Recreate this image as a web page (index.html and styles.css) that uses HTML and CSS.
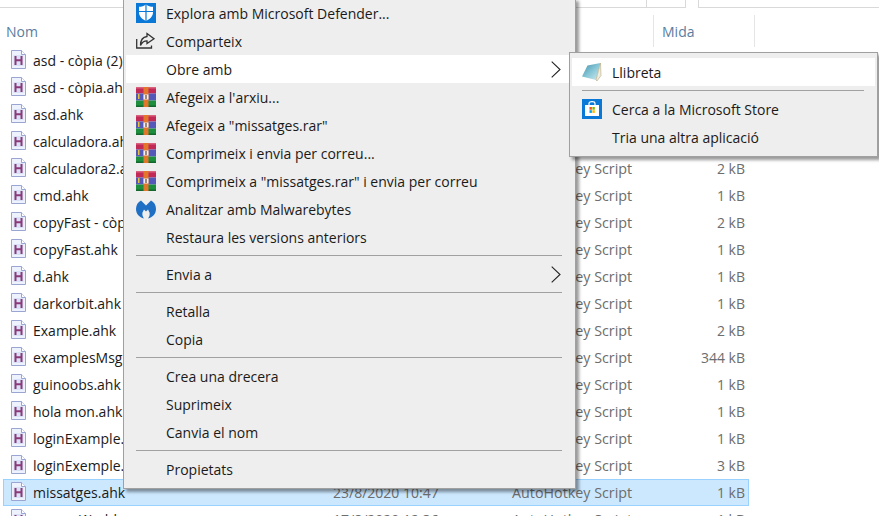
FILE: index.html
```html
<!DOCTYPE html>
<html lang="ca">
<head>
    <meta charset="UTF-8">
    <title>Obre amb</title>
    <link rel="stylesheet" href="styles.css">
</head>
<body>

    <svg class="defs" width="0" height="0">
        <defs>
            <linearGradient id="pad" x1="0" y1="0" x2="1" y2="1">
                <stop offset="0" stop-color="#3f8ea8"/>
                <stop offset="0.5" stop-color="#86c6d6"/>
                <stop offset="1" stop-color="#d4ecf0"/>
            </linearGradient>
        </defs>
        <symbol id="ahk" viewBox="0 0 15 19">
            <path d="M.5 .5H10.500L14.500 4.500V18.500H.5Z" fill="#eef2fc" stroke="#9aa5d2"/>
            <path d="M10.500 .5V4.500H14.500" fill="#fff" stroke="#9aa5d2"/>
            <rect x="2.500" y="5" width="10" height="11" fill="#d9e1f6"/>
            <path d="M4.500 6V15M10.500 6V15M4.500 10.300H10.500" fill="none" stroke="#8a3a78" stroke-width="2"/>
        </symbol>
        <symbol id="rar" viewBox="0 0 20 20">
            <rect y="0" width="20" height="6.500" fill="#c22a55"/>
            <rect y="0" width="20" height="1.500" fill="#d9627f"/>
            <rect y="6.500" width="20" height="7" fill="#5458b8"/>
            <rect y="13.500" width="20" height="6.500" fill="#1d8d3e"/>
            <rect y="18.500" width="20" height="1.500" fill="#14682d"/>
            <rect x="7.500" width="5" height="20" fill="#e2762a"/>
            <rect x="2" y="7" width="1.500" height="5" fill="#e8c23c"/>
            <rect x="7.500" y="7.500" width="5" height="5" fill="#f4f0ee"/>
            <rect x="9.300" y="8" width="1.400" height="4" fill="#7a5a50"/>
        </symbol>
    </svg>

    <div class="explorer">
        <div class="tabs">
            <span class="tab-line tab-a"></span>
            <span class="tab-line tab-b"></span>
            <span class="tab-line tab-c"></span>
            <span class="tab-gap"></span>
        </div>
        <div class="head">
            <span class="col-name">Nom</span>
            <span class="col-size">Mida</span>
        </div>
        <div class="files">
            <div class="file"><svg class="ficon"><use href="#ahk"/></svg><span class="fname">asd - còpia (2).ahk</span><span class="ftype">AutoHotkey Script</span><span class="fsize">1 kB</span></div>
            <div class="file"><svg class="ficon"><use href="#ahk"/></svg><span class="fname">asd - còpia.ahk</span><span class="ftype">AutoHotkey Script</span><span class="fsize">1 kB</span></div>
            <div class="file"><svg class="ficon"><use href="#ahk"/></svg><span class="fname">asd.ahk</span><span class="ftype">AutoHotkey Script</span><span class="fsize">1 kB</span></div>
            <div class="file"><svg class="ficon"><use href="#ahk"/></svg><span class="fname">calculadora.ahk</span><span class="ftype">AutoHotkey Script</span><span class="fsize">1 kB</span></div>
            <div class="file"><svg class="ficon"><use href="#ahk"/></svg><span class="fname">calculadora2.ahk</span><span class="ftype">AutoHotkey Script</span><span class="fsize">2 kB</span></div>
            <div class="file"><svg class="ficon"><use href="#ahk"/></svg><span class="fname">cmd.ahk</span><span class="ftype">AutoHotkey Script</span><span class="fsize">1 kB</span></div>
            <div class="file"><svg class="ficon"><use href="#ahk"/></svg><span class="fname">copyFast - còpia.ahk</span><span class="ftype">AutoHotkey Script</span><span class="fsize">2 kB</span></div>
            <div class="file"><svg class="ficon"><use href="#ahk"/></svg><span class="fname">copyFast.ahk</span><span class="ftype">AutoHotkey Script</span><span class="fsize">1 kB</span></div>
            <div class="file"><svg class="ficon"><use href="#ahk"/></svg><span class="fname">d.ahk</span><span class="ftype">AutoHotkey Script</span><span class="fsize">1 kB</span></div>
            <div class="file"><svg class="ficon"><use href="#ahk"/></svg><span class="fname">darkorbit.ahk</span><span class="ftype">AutoHotkey Script</span><span class="fsize">1 kB</span></div>
            <div class="file"><svg class="ficon"><use href="#ahk"/></svg><span class="fname">Example.ahk</span><span class="ftype">AutoHotkey Script</span><span class="fsize">2 kB</span></div>
            <div class="file"><svg class="ficon"><use href="#ahk"/></svg><span class="fname">examplesMsgBox.ahk</span><span class="ftype">AutoHotkey Script</span><span class="fsize">344 kB</span></div>
            <div class="file"><svg class="ficon"><use href="#ahk"/></svg><span class="fname">guinoobs.ahk</span><span class="ftype">AutoHotkey Script</span><span class="fsize">1 kB</span></div>
            <div class="file"><svg class="ficon"><use href="#ahk"/></svg><span class="fname">hola mon.ahk</span><span class="ftype">AutoHotkey Script</span><span class="fsize">1 kB</span></div>
            <div class="file"><svg class="ficon"><use href="#ahk"/></svg><span class="fname">loginExample.ahk</span><span class="ftype">AutoHotkey Script</span><span class="fsize">1 kB</span></div>
            <div class="file"><svg class="ficon"><use href="#ahk"/></svg><span class="fname">loginExemple.ahk</span><span class="ftype">AutoHotkey Script</span><span class="fsize">3 kB</span></div>
            <div class="file selected"><svg class="ficon"><use href="#ahk"/></svg><span class="fname">missatges.ahk</span><span class="fdate">23/8/2020 10:47</span><span class="ftype">AutoHotkey Script</span><span class="fsize">1 kB</span></div>
            <div class="file"><svg class="ficon"><use href="#ahk"/></svg><span class="fname">nuevo (1).ahk</span><span class="fdate">17/8/2020 12:36</span><span class="ftype">AutoHotkey Script</span><span class="fsize">1 kB</span></div>
        </div>
    </div>

    <div class="menu main-menu">
        <div class="item">
            <svg class="icon" viewBox="0 0 20 20">
                <rect width="20" height="20" fill="#0a78d7"/>
                <path d="M10 1.500C8 3 5.500 3.800 3 3.800V9.500C3 13.500 6.500 16.500 10 18C13.500 16.500 17 13.500 17 9.500V3.800C14.500 3.800 12 3 10 1.500Z" fill="#fff"/>
                <path d="M10 1.500V18M3 8.500H17" stroke="#0a78d7" stroke-width="1.200"/>
            </svg>
            <span>Explora amb Microsoft Defender...</span>
        </div>
        <div class="item">
            <svg class="icon" viewBox="0 0 20 20" fill="none" stroke="#333" stroke-width="1.300">
                <path d="M.7 8V17H15.500V14.500"/>
                <path d="M11 2.500L18 7.800L11 12.500V9.800C8 9.800 6 11 4.500 14.500C4.500 9.500 7 6 11 5.500Z"/>
            </svg>
            <span>Comparteix</span>
        </div>
        <div class="item active">
            <span class="no-icon">Obre amb</span>
            <svg class="arrow" viewBox="0 0 10 17"><path d="M.7 .7L9 8.500L.7 16.300" fill="none" stroke="#222" stroke-width="1.100"/></svg>
        </div>
        <div class="item"><svg class="icon"><use href="#rar"/></svg><span>Afegeix a l'arxiu...</span></div>
        <div class="item"><svg class="icon"><use href="#rar"/></svg><span>Afegeix a "missatges.rar"</span></div>
        <div class="item"><svg class="icon"><use href="#rar"/></svg><span>Comprimeix i envia per correu...</span></div>
        <div class="item"><svg class="icon"><use href="#rar"/></svg><span>Comprimeix a "missatges.rar" i envia per correu</span></div>
        <div class="item">
            <svg class="icon" viewBox="0 0 20 20">
                <path d="M5 1.500C2 3 0 6 0 10C0 15 3.500 18.500 8 19.500C6.500 17.500 6 15.500 6.500 13.500L8 10.500L10 12.500L12 10.500L13.500 13.500C14 15.500 13.500 17.500 12 19.500C16.500 18.500 20 15 20 10C20 6 18 3 15 1.500L10 6.500Z" fill="#1f6fc4"/>
            </svg>
            <span>Analitzar amb Malwarebytes</span>
        </div>
        <div class="item"><span class="no-icon">Restaura les versions anteriors</span></div>
        <div class="sep"></div>
        <div class="item">
            <span class="no-icon">Envia a</span>
            <svg class="arrow" viewBox="0 0 10 17"><path d="M.7 .7L9 8.500L.7 16.300" fill="none" stroke="#222" stroke-width="1.100"/></svg>
        </div>
        <div class="sep"></div>
        <div class="item"><span class="no-icon">Retalla</span></div>
        <div class="item"><span class="no-icon">Copia</span></div>
        <div class="sep"></div>
        <div class="item"><span class="no-icon">Crea una drecera</span></div>
        <div class="item"><span class="no-icon">Suprimeix</span></div>
        <div class="item"><span class="no-icon">Canvia el nom</span></div>
        <div class="sep"></div>
        <div class="item"><span class="no-icon">Propietats</span></div>
    </div>

    <div class="menu sub-menu">
        <div class="item active">
            <svg class="icon" viewBox="0 0 20 20">
                <path d="M5.500 3.500L18.500 1L14 18L0 14.500Z" fill="url(#pad)"/>
                <path d="M18.500 1L19 13.500L15 19L14 18Z" fill="#efece0" stroke="#b9a97c" stroke-width=".6"/>
            </svg>
            <span>Llibreta</span>
        </div>
        <div class="sep sub-sep"></div>
        <div class="item">
            <svg class="icon" viewBox="0 0 20 20">
                <rect width="20" height="20" fill="#0a78d7"/>
                <path d="M3 6H17V17H3Z" fill="#fff"/>
                <path d="M7 6V4.500C7 2 13 2 13 4.500V6" fill="none" stroke="#fff" stroke-width="1.200"/>
                <rect x="7.500" y="8" width="2.400" height="2.700" fill="#f25022"/>
                <rect x="10.400" y="8" width="2.400" height="2.700" fill="#7fba00"/>
                <rect x="7.500" y="11.200" width="2.400" height="2.700" fill="#00a4ef"/>
                <rect x="10.400" y="11.200" width="2.400" height="2.700" fill="#ffb900"/>
            </svg>
            <span>Cerca a la Microsoft Store</span>
        </div>
        <div class="item"><span class="no-icon">Tria una altra aplicació</span></div>
    </div>

</body>
</html>
```

FILE: styles.css
```css
html, body {
    margin: 0;
    height: 100%;
    overflow: hidden;
}

body {
    position: relative;
    background-color: #fff;
    font-family: "Open Sans", "Noto Sans", sans-serif;
    font-size: 14px;
    color: #1a1a1a;
}

.defs {
    position: absolute;
}

/* explorer behind the menus */
.explorer {
    display: flex;
    flex-direction: column;
}

.tabs {
    position: relative;
    height: 7px;
    border-bottom: 1px solid #d9d9d9;
}

.tab-line {
    position: absolute;
    top: 0;
    width: 1px;
    height: 7px;
    background-color: #d9d9d9;
}

.tab-a { left: 646px; }
.tab-b { left: 685px; }
.tab-c { left: 698px; }

/* the open tab has no line under it */
.tab-gap {
    position: absolute;
    left: 686px;
    top: 7px;
    width: 12px;
    height: 1px;
    background-color: #fff;
}

.head {
    display: flex;
    height: 39px;
    padding-top: 7px;
    box-sizing: border-box;
    color: #5a7d9f;
}

.col-name {
    width: 654px;
    padding: 7px 0 0 6px;
    box-sizing: border-box;
    border-right: 1px solid #e5e5e5;
}

.col-size {
    width: 101px;
    padding: 7px 0 0 8px;
    box-sizing: border-box;
    border-right: 1px solid #e5e5e5;
}

.files {
    padding-left: 3px;
}

.file {
    display: flex;
    align-items: center;
    width: 746px;
    height: 27px;
    box-sizing: border-box;
    border: 1px solid transparent;
}

.file.selected {
    background-color: #cce8ff;
    border-color: #99d1ff;
}

.ficon {
    width: 15px;
    height: 19px;
    margin: 0 0 2px 7px;
    flex: none;
}

.fname {
    width: 300px;
    margin-left: 7px;
}

.fdate {
    color: #6d6d6d;
}

.ftype {
    position: absolute;
    left: 512px;
    font-size: 14.3px;
    color: #6d6d6d;
}

.fsize {
    margin-left: auto;
    padding-right: 3px;
    color: #6d6d6d;
}

/* context menus */
.menu {
    position: absolute;
    background-color: #eeeeee;
    border: 1px solid #a0a0a0;
    box-shadow: 3px 3px 3px rgba(0, 0, 0, 0.4);
    box-sizing: border-box;
}

.main-menu {
    left: 123px;
    top: -2px;
    width: 453px;
    height: 491px;
    padding-left: 2px;
}

.sub-menu {
    left: 569px;
    top: 52px;
    width: 309px;
    height: 105px;
    padding: 5px 2px 0;
}

.item {
    display: flex;
    align-items: center;
    height: 28px;
    padding-left: 10px;
    position: relative;
}

.item.active {
    background-color: #fff;
}

.icon {
    width: 20px;
    height: 20px;
    flex: none;
    margin-right: 10px;
}

.no-icon {
    margin-left: 30px;
}

.arrow {
    position: absolute;
    right: 14px;
    width: 10px;
    height: 17px;
}

.sep {
    height: 1px;
    margin: 4px 13px 4px 10px;
    background-color: #a0a0a0;
}

.sub-sep {
    margin: 4px 11px 4px 10px;
}
```
